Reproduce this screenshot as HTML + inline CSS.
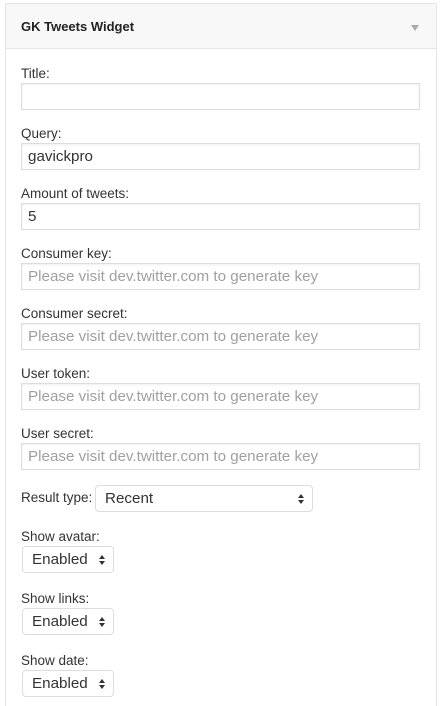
<!DOCTYPE html><html style="height:706px;overflow:hidden"><head><style>
body{margin:0;width:442px;height:706px;background:#fff;font-family:"Liberation Sans",sans-serif;position:relative;overflow:hidden}
.box{position:absolute;left:5px;top:3px;width:430px;height:704px;border:1px solid #e5e5e5;border-bottom:none;background:#fff}
.hd{position:absolute;left:6px;top:4px;width:430px;height:44px;background:#f8f8f8;border-bottom:1px solid #e5e5e5}
.hd b{position:absolute;left:15px;top:15px;font-size:13px;color:#222}
.hd i{position:absolute;right:17px;top:21px;width:0;height:0;border-left:4px solid transparent;border-right:4px solid transparent;border-top:6px solid #aaa}
.l{position:absolute;left:21px;font-size:13.5px;color:#333}
.in{position:absolute;left:21px;font-size:15.2px;line-height:25px;padding-left:6px;box-sizing:border-box;width:399px;height:27px;color:#333;border:1px solid #ddd;box-shadow:inset 0 1px 2px rgba(0,0,0,.07)}
.ph{color:#a0a0a0}
.sel{position:absolute;height:27px;border:1px solid #ddd;border-radius:4px;box-sizing:border-box;font-size:15.2px;line-height:25px;padding-left:9px;color:#333}
.ar{position:absolute;right:7px;top:8px;width:0}
.ar:before{content:"";position:absolute;left:0;top:0;border-left:3.5px solid transparent;border-right:3.5px solid transparent;border-bottom:4px solid #333}
.ar:after{content:"";position:absolute;left:0;top:6px;border-left:3.5px solid transparent;border-right:3.5px solid transparent;border-top:4px solid #333}
</style></head><body>
<div class="box"></div>
<div class="hd"><b>GK Tweets Widget</b><i></i></div>
<div class="l" style="top:66px">Title:</div><div class="in" style="top:83px"></div>
<div class="l" style="top:126px">Query:</div><div class="in" style="top:143px">gavickpro</div>
<div class="l" style="top:186px">Amount of tweets:</div><div class="in" style="top:203px">5</div>
<div class="l" style="top:246px">Consumer key:</div><div class="in ph" style="top:263px">Please visit dev.twitter.com to generate key</div>
<div class="l" style="top:306px">Consumer secret:</div><div class="in ph" style="top:323px">Please visit dev.twitter.com to generate key</div>
<div class="l" style="top:366px">User token:</div><div class="in ph" style="top:383px">Please visit dev.twitter.com to generate key</div>
<div class="l" style="top:426px">User secret:</div><div class="in ph" style="top:443px">Please visit dev.twitter.com to generate key</div>
<div class="l" style="top:490px">Result type:</div><div class="sel" style="left:95px;top:485px;width:218px">Recent<span class="ar" style="right:14px"></span></div>
<div class="l" style="top:529px">Show avatar:</div><div class="sel" style="left:22px;top:546px;width:92px">Enabled<span class="ar" style="right:14px"></span></div>
<div class="l" style="top:591px">Show links:</div><div class="sel" style="left:22px;top:608px;width:92px">Enabled<span class="ar" style="right:14px"></span></div>
<div class="l" style="top:653px">Show date:</div><div class="sel" style="left:22px;top:670px;width:92px">Enabled<span class="ar" style="right:14px"></span></div>
</body></html>
